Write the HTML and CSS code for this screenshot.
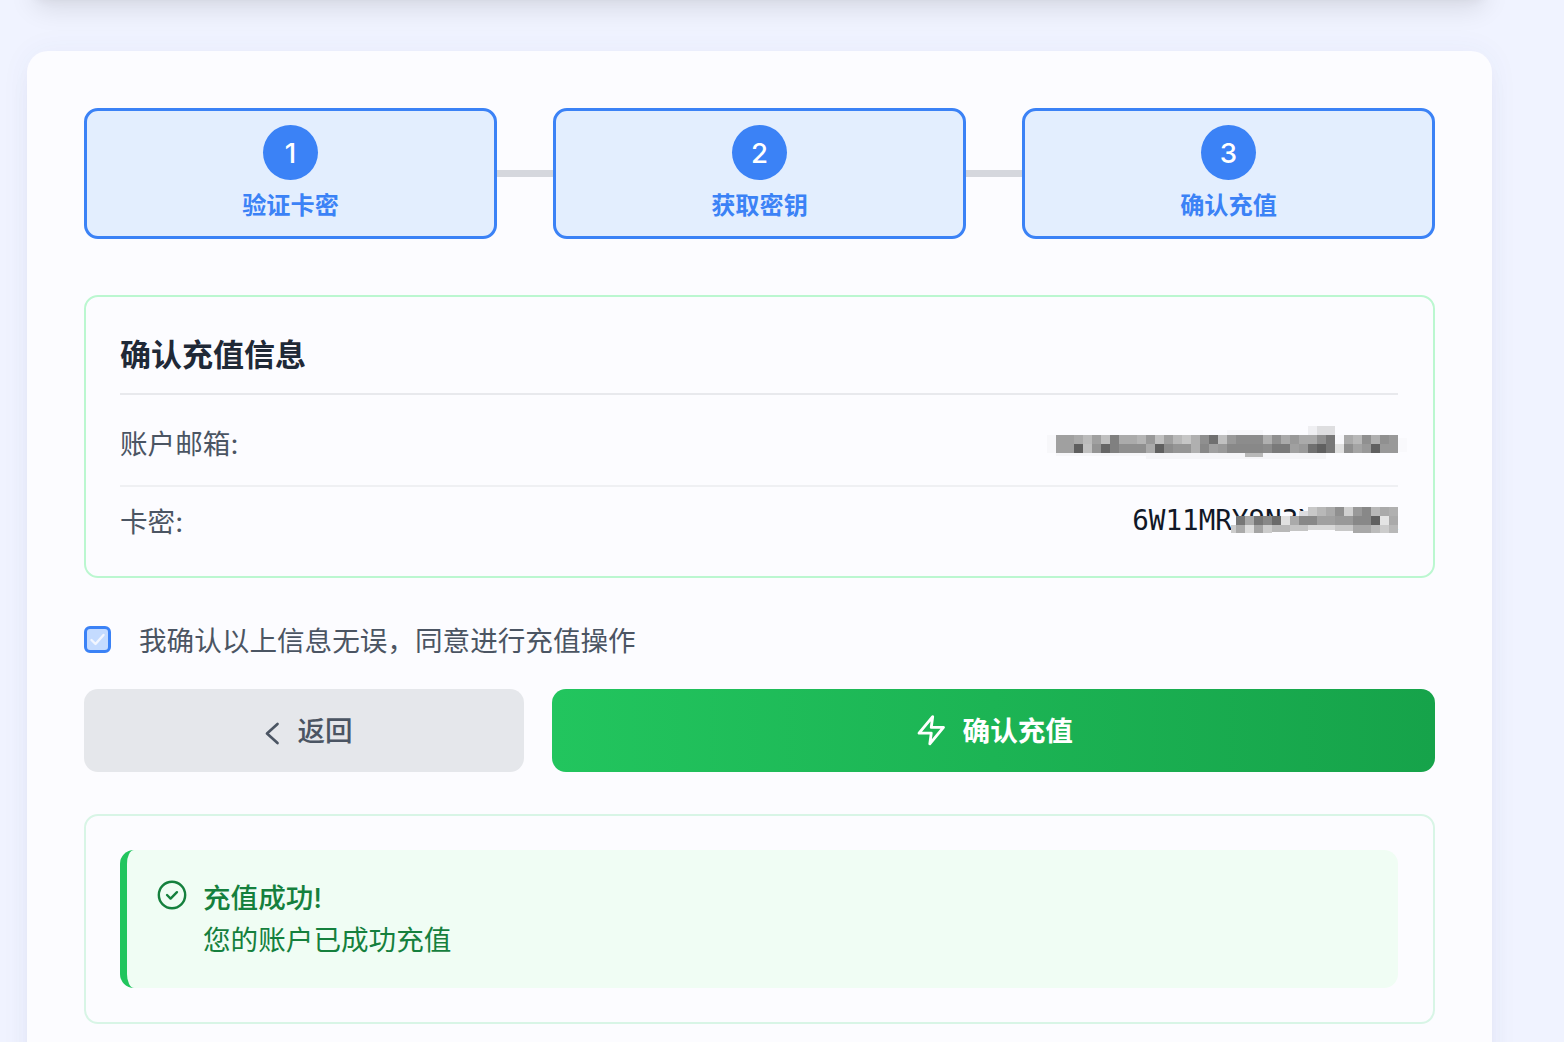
FILE: index.html
```html
<!DOCTYPE html>
<html lang="zh-CN">
<head>
<meta charset="utf-8">
<title>确认充值</title>
<link rel="stylesheet" href="styles.css">
</head>
<body>
<div class="page">
  <div class="prev-card"></div>
  <main class="card">
    <ol class="steps">
      <li class="step"><span class="step-num">1</span><span class="step-label">验证卡密</span></li>
      <li class="step-line"></li>
      <li class="step"><span class="step-num">2</span><span class="step-label">获取密钥</span></li>
      <li class="step-line"></li>
      <li class="step"><span class="step-num">3</span><span class="step-label">确认充值</span></li>
    </ol>

    <section class="info">
      <h2 class="info-title">确认充值信息</h2>
      <div class="info-row row-email">
        <span class="info-label">账户邮箱:</span>
        <svg class="mosaic-email" width="360" height="36" viewBox="0 0 360 36" shape-rendering="crispEdges" aria-hidden="true">
          <rect x="0" y="9" width="9" height="18" fill="#f7f7fa"/><rect x="351" y="12" width="9" height="14" fill="#f9f9fc"/>
          <rect x="9" y="27" width="90" height="3" fill="#f6f6f9"/><rect x="99" y="27" width="180" height="6" fill="#f5f5f8"/><rect x="180" y="4" width="36" height="5" fill="#f7f7fa"/>
          <rect x="270" y="0" width="18" height="9" fill="#dedee0"/><rect x="261" y="0" width="9" height="9" fill="#efeff2"/><rect x="198" y="27" width="18" height="4" fill="#b8b8b8"/>
          <g>
            <rect x="9" y="9" width="18" height="9" fill="#a0a0a0"/><rect x="27" y="9" width="9" height="9" fill="#aaa"/><rect x="36" y="9" width="9" height="9" fill="#bbb"/><rect x="45" y="9" width="9" height="9" fill="#a0a0a0"/><rect x="54" y="9" width="9" height="9" fill="#c0c0c0"/><rect x="63" y="9" width="9" height="9" fill="#808080"/><rect x="72" y="9" width="18" height="9" fill="#ababab"/><rect x="90" y="9" width="9" height="9" fill="#b5b5b5"/><rect x="99" y="9" width="9" height="9" fill="#999"/><rect x="108" y="9" width="9" height="9" fill="#c0c0c0"/><rect x="117" y="9" width="9" height="9" fill="#a0a0a0"/><rect x="126" y="9" width="9" height="9" fill="#b8b8b8"/><rect x="135" y="9" width="9" height="9" fill="#c6c6c6"/><rect x="144" y="9" width="9" height="9" fill="#b0b0b0"/><rect x="153" y="9" width="9" height="9" fill="#8f8f8f"/><rect x="162" y="9" width="9" height="9" fill="#707070"/><rect x="171" y="9" width="9" height="9" fill="#c0c0c0"/><rect x="180" y="9" width="9" height="9" fill="#999"/><rect x="189" y="9" width="27" height="9" fill="#8c8c8c"/><rect x="216" y="9" width="9" height="9" fill="#b0b0b0"/><rect x="225" y="9" width="9" height="9" fill="#909090"/><rect x="234" y="9" width="9" height="9" fill="#aaa"/><rect x="243" y="9" width="9" height="9" fill="#999"/><rect x="252" y="9" width="18" height="9" fill="#aaa"/><rect x="270" y="9" width="9" height="9" fill="#909090"/><rect x="279" y="9" width="9" height="9" fill="#777"/><rect x="288" y="9" width="9" height="9" fill="#f8f8fb"/><rect x="297" y="9" width="9" height="9" fill="#aaa"/><rect x="306" y="9" width="9" height="9" fill="#b8b8b8"/><rect x="315" y="9" width="9" height="9" fill="#909090"/><rect x="324" y="9" width="9" height="9" fill="#b0b0b0"/><rect x="333" y="9" width="9" height="9" fill="#909090"/><rect x="342" y="9" width="9" height="9" fill="#999"/>
          </g>
          <g>
            <rect x="9" y="18" width="18" height="9" fill="#a0a0a0"/><rect x="27" y="18" width="9" height="9" fill="#5e5e5e"/><rect x="36" y="18" width="9" height="9" fill="#c0c0c0"/><rect x="45" y="18" width="9" height="9" fill="#949494"/><rect x="54" y="18" width="9" height="9" fill="#666"/><rect x="63" y="18" width="9" height="9" fill="#808080"/><rect x="72" y="18" width="27" height="9" fill="#8f8f8f"/><rect x="99" y="18" width="9" height="9" fill="#aaa"/><rect x="108" y="18" width="9" height="9" fill="#606060"/><rect x="117" y="18" width="9" height="9" fill="#8c8c8c"/><rect x="126" y="18" width="18" height="9" fill="#959595"/><rect x="144" y="18" width="9" height="9" fill="#b0b0b0"/><rect x="153" y="18" width="9" height="9" fill="#888"/><rect x="162" y="18" width="9" height="9" fill="#a0a0a0"/><rect x="171" y="18" width="9" height="9" fill="#999"/><rect x="180" y="18" width="27" height="9" fill="#888"/><rect x="207" y="18" width="9" height="9" fill="#888"/><rect x="216" y="18" width="9" height="9" fill="#8c8c8c"/><rect x="225" y="18" width="18" height="9" fill="#7a7a7a"/><rect x="243" y="18" width="9" height="9" fill="#a0a0a0"/><rect x="252" y="18" width="9" height="9" fill="#999"/><rect x="261" y="18" width="9" height="9" fill="#707070"/><rect x="270" y="18" width="9" height="9" fill="#606060"/><rect x="279" y="18" width="9" height="9" fill="#777"/><rect x="288" y="18" width="9" height="9" fill="#e0e0e0"/><rect x="297" y="18" width="9" height="9" fill="#8f8f8f"/><rect x="306" y="18" width="9" height="9" fill="#a4a4a4"/><rect x="315" y="18" width="9" height="9" fill="#999"/><rect x="324" y="18" width="9" height="9" fill="#606060"/><rect x="333" y="18" width="18" height="9" fill="#999"/>
          </g>
        </svg>
      </div>
      <div class="info-row row-key">
        <span class="info-label">卡密:</span>
        <span class="key-wrap">
          <span class="key-value">6W11MRY9N3XXXXXX</span>
          <svg class="mosaic-key" width="170" height="27" viewBox="0 0 170 27" shape-rendering="crispEdges" aria-hidden="true">
            <rect x="71" y="4" width="9" height="5" fill="#dcdcdf"/><rect x="80" y="0" width="9" height="9" fill="#c8c8c8"/><rect x="89" y="0" width="9" height="9" fill="#b8b8b8"/><rect x="98" y="0" width="9" height="9" fill="#aaa"/><rect x="107" y="0" width="9" height="9" fill="#909090"/><rect x="116" y="0" width="9" height="9" fill="#d0d0d0"/><rect x="125" y="0" width="9" height="9" fill="#999"/><rect x="134" y="0" width="9" height="9" fill="#888"/><rect x="143" y="0" width="9" height="9" fill="#b8b8b8"/><rect x="152" y="0" width="9" height="9" fill="#aaa"/><rect x="161" y="0" width="9" height="9" fill="#b0b0b0"/>
            <rect x="8" y="9" width="9" height="9" fill="#777"/><rect x="17" y="9" width="9" height="9" fill="#a8a8a8"/><rect x="26" y="9" width="9" height="9" fill="#777"/><rect x="35" y="9" width="9" height="9" fill="#888"/><rect x="44" y="9" width="9" height="9" fill="#6a6a6a"/><rect x="53" y="9" width="9" height="9" fill="#e0e0e0"/><rect x="62" y="9" width="9" height="9" fill="#aaa"/><rect x="71" y="9" width="18" height="9" fill="#888"/><rect x="89" y="9" width="18" height="9" fill="#a0a0a0"/><rect x="107" y="9" width="18" height="9" fill="#999"/><rect x="125" y="9" width="18" height="9" fill="#888"/><rect x="143" y="9" width="9" height="9" fill="#606060"/><rect x="152" y="9" width="9" height="9" fill="#e4e4e4"/><rect x="161" y="9" width="9" height="9" fill="#aaa"/>
            <rect x="3" y="18" width="5" height="8" fill="#ccc"/><rect x="8" y="18" width="9" height="8" fill="#aaa"/><rect x="17" y="18" width="9" height="8" fill="#ddd"/><rect x="26" y="18" width="9" height="8" fill="#a4a4a4"/><rect x="35" y="18" width="9" height="8" fill="#ccc"/><rect x="44" y="18" width="18" height="7" fill="#b8b8b8"/><rect x="62" y="18" width="18" height="6" fill="#c4c4c4"/><rect x="80" y="18" width="27" height="5" fill="#d8d8d8"/><rect x="107" y="18" width="18" height="6" fill="#c8c8c8"/><rect x="125" y="18" width="18" height="8" fill="#a8a8a8"/><rect x="143" y="18" width="9" height="8" fill="#bbb"/><rect x="152" y="18" width="9" height="8" fill="#ccc"/><rect x="161" y="18" width="9" height="8" fill="#b8b8b8"/>
          </svg>
        </span>
      </div>
    </section>

    <label class="confirm-row">
      <span class="checkbox"><svg width="21" height="21" viewBox="0 0 21 21" fill="none"><path d="M4.5 11l4 4 8-9" stroke="#f2f6ff" stroke-width="2.4" stroke-linecap="round" stroke-linejoin="round"/></svg></span>
      <span class="confirm-text">我确认以上信息无误，同意进行充值操作</span>
    </label>

    <div class="actions">
      <button class="btn btn-back" type="button">
        <svg width="28" height="28" viewBox="0 0 28 28" fill="none" stroke="#4b5563" stroke-width="2.7" stroke-linecap="round" stroke-linejoin="round"><path d="M22.5 7L12 16.5 22.5 26"/></svg>
        <span class="btn-text">返回</span>
      </button>
      <button class="btn btn-go" type="button">
        <svg width="34.5" height="34.5" viewBox="0 0 24 24" fill="none" stroke="#fff" stroke-width="2" stroke-linecap="round" stroke-linejoin="round"><path d="M13 2.5L3.5 14H12l-1 7.5L20.5 10H12l1-7.5z"/></svg>
        <span class="btn-text">确认充值</span>
      </button>
    </div>

    <section class="result">
      <div class="alert">
        <svg class="alert-icon" width="34" height="34" viewBox="0 0 24 24" fill="none" stroke="#15803d" stroke-width="1.7" stroke-linecap="round" stroke-linejoin="round"><circle cx="12" cy="12" r="9.3"/><path d="M8.5 12l2.5 2.5 4.5-4.5"/></svg>
        <div class="alert-body">
          <div class="alert-title">充值成功!</div>
          <div class="alert-text">您的账户已成功充值</div>
        </div>
      </div>
    </section>
  </main>
</div>
</body>
</html>
```

FILE: styles.css
```css
* { box-sizing: border-box; }
html, body { margin: 0; height: 100%; }
body {
  background: #f0f3ff;
  font-family: Inter, "Noto Sans CJK SC", sans-serif;
  overflow: hidden;
}
.page {
  width: 1465px;
  margin-left: 27px;
  height: 1042px;
  overflow: visible;
}
.prev-card {
  height: 40px;
  margin-top: -43px;
  margin-bottom: 54px;
  background: #fbfbff;
  border-radius: 21px;
  box-shadow: 0 17px 26px -5px rgba(0,0,0,.1), 0 7px 10px -3px rgba(0,0,0,.05);
}
.card {
  background: #fcfcff;
  border-radius: 21px;
  padding: 57px;
  height: 1040px;
  box-shadow: 0 0 30px rgba(60,70,160,.05), 0 17px 26px -5px rgba(30,40,90,.05);
}
.steps {
  list-style: none;
  margin: 0;
  padding: 0;
  display: flex;
  align-items: center;
}
.step {
  flex: 1 1 0;
  height: 131px;
  border: 3px solid #3b82f6;
  border-radius: 14px;
  background: #e3eefe;
  display: flex;
  flex-direction: column;
  align-items: center;
  padding-top: 14px;
}
.step-num {
  width: 55px;
  height: 55px;
  border-radius: 50%;
  background: #3b82f6;
  color: #fff;
  font-size: 27.6px;
  font-weight: 500;
  display: flex;
  align-items: center;
  justify-content: center;
}
.step-label {
  margin-top: 8px;
  font-size: 24.15px;
  line-height: 35px;
  font-weight: 600;
  color: #3b82f6;
}
.step-line {
  flex: 0 0 56px;
  height: 7px;
  background: #d5d7dd;
}
.info {
  margin-top: 56px;
  height: 283px;
  border: 2px solid #bbf7d0;
  border-radius: 14px;
  padding: 0 35px 0 34px;
}
.info-title {
  margin: 0;
  height: 98px;
  padding-top: 37px;
  font-size: 31px;
  line-height: 42px;
  font-weight: 600;
  color: #1f2937;
  border-bottom: 2px solid #e8e9ed;
}
.info-row {
  display: flex;
  justify-content: space-between;
  align-items: center;
}
.row-email {
  height: 92px;
  border-bottom: 2px solid #eff0f3;
  padding-top: 4px;
}
.row-key {
  height: 70px;
  padding-bottom: 4px;
}
.info-label {
  font-size: 27.6px;
  color: #4b5563;
}
.mosaic-email {
  display: block;
  margin-right: -9px;
  transform: translateY(2px);
}
.key-wrap {
  position: relative;
  display: block;
}
.key-value {
  display: block;
  font-family: "DejaVu Sans Mono", monospace;
  font-size: 27.6px;
  line-height: 38px;
  font-weight: 400;
  color: #111827;
  margin-top: 2px;
}
.mosaic-key {
  position: absolute;
  right: 0;
  top: 7px;
}
.confirm-row {
  display: flex;
  align-items: center;
  gap: 28px;
  margin-top: 40px;
  height: 42px;
}
.checkbox {
  width: 27px;
  height: 27px;
  border: 3px solid #3b82f6;
  border-radius: 6px;
  background: #c4dbff;
  display: flex;
  align-items: center;
  justify-content: center;
}
.confirm-text {
  font-size: 27.6px;
  color: #4b5563;
}
.actions {
  display: flex;
  gap: 28px;
  margin-top: 29px;
}
.btn {
  height: 83px;
  border: 0;
  border-radius: 14px;
  font-family: inherit;
  font-size: 27.6px;
  display: flex;
  align-items: center;
  justify-content: center;
  gap: 14px;
}
.btn-text { padding-bottom: 4px; }
.btn-back {
  flex: 0 0 440px;
  background: #e5e7eb;
  color: #4b5563;
  font-weight: 500;
}
.btn-go {
  flex: 1 1 auto;
  background: linear-gradient(90deg, #22c55e, #16a34a);
  color: #fff;
  font-weight: 700;
}
.result {
  margin-top: 42px;
  height: 210px;
  border: 2px solid #d8f5e6;
  border-radius: 14px;
  padding: 34px 35px 34px 34px;
}
.alert {
  height: 138px;
  background: #f0fdf4;
  border-left: 7px solid #22c55e;
  border-radius: 14px;
  display: flex;
  gap: 14px;
  padding: 27px 28px;
  color: #15803d;
}
.alert-icon { flex: none; margin-top: 1px; }
.alert-body {
  font-size: 27.6px;
  line-height: 42px;
}
.alert-title { font-weight: 500; }
```
